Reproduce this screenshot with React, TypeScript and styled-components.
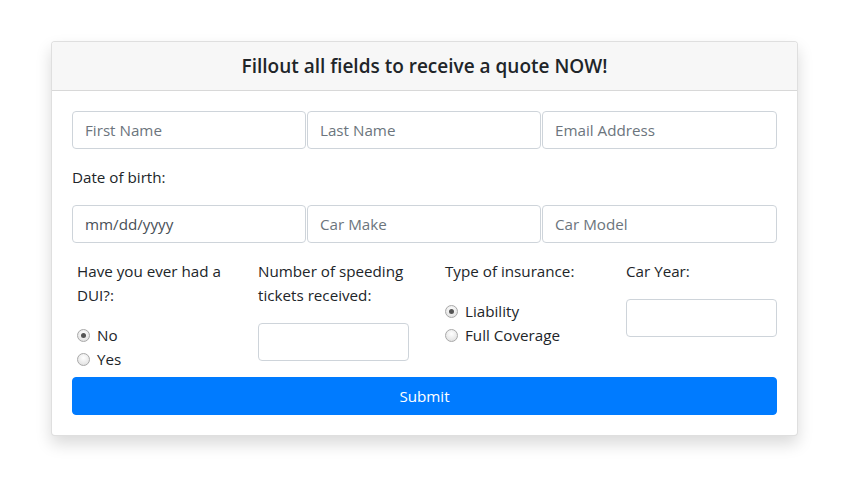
import React from "react";
import styled, { createGlobalStyle } from "styled-components";

const Global = createGlobalStyle`
  html, body { margin: 0; padding: 0; background: #fff; }
  body {
    font-family: "Open Sans", "Noto Sans", "Liberation Sans", sans-serif;
    font-size: 15.2px;
    line-height: 24px;
    color: #212529;
  }
  * { box-sizing: border-box; }
`;

const Page = styled.div`
  padding: 41px 0 40px 51px;
`;

const Card = styled.form`
  width: 747px;
  border: 1px solid rgba(0, 0, 0, 0.125);
  border-radius: 4px;
  background: #fff;
  box-shadow: 0 8px 16px rgba(0, 0, 0, 0.15);
  overflow: hidden;
`;

const Header = styled.div`
  background: #f7f7f7;
  border-bottom: 1px solid rgba(0, 0, 0, 0.125);
  padding: 12px 20px;
  text-align: center;
  font-size: 19px;
  line-height: 24px;
  font-weight: 600;
  color: #212529;
`;

const Body = styled.div`
  padding: 20px;
  display: flex;
  flex-direction: column;
`;

const InputRow = styled.div`
  display: grid;
  grid-template-columns: 234px 234px 235px;
  gap: 1px;
`;

const Input = styled.input<{ $dark?: boolean; $w?: number }>`
  display: block;
  width: ${(p) => (p.$w ? `${p.$w}px` : "100%")};
  height: 38px;
  padding: 6px 12px;
  font: inherit;
  color: #495057;
  background: #fff;
  border: 1px solid #ced4da;
  border-radius: 4px;
  outline: none;
  &::placeholder {
    color: ${(p) => (p.$dark ? "#495057" : "#6c757d")};
    opacity: 1;
  }
`;

const Label = styled.div<{ $mt?: number; $mb?: number }>`
  margin-top: ${(p) => p.$mt ?? 0}px;
  margin-bottom: ${(p) => p.$mb ?? 0}px;
`;

const Columns = styled.div`
  display: grid;
  grid-template-columns: 181px 187px 181px 151px;
  padding-left: 5px;
  margin-top: 16px;
`;

const Col = styled.div`
  display: flex;
  flex-direction: column;
  align-items: flex-start;
`;

const ColLabel = styled.div`
  margin-bottom: 16px;
`;

const RadioLine = styled.label`
  display: flex;
  align-items: center;
  gap: 7px;
  height: 24px;
`;

const RadioDot = styled.span<{ $on?: boolean }>`
  width: 13px;
  height: 13px;
  border-radius: 50%;
  border: 1px solid #a9a9a9;
  background: radial-gradient(circle at 50% 35%, #ffffff 0%, #e6e6e6 70%, #d6d6d6 100%);
  display: flex;
  align-items: center;
  justify-content: center;
  &::after {
    content: "";
    width: 5px;
    height: 5px;
    border-radius: 50%;
    background: ${(p) => (p.$on ? "#555" : "transparent")};
  }
`;

const Submit = styled.button`
  margin-top: 6px;
  height: 38px;
  width: 100%;
  border: 1px solid #007bff;
  border-radius: 4px;
  background: #007bff;
  color: #fff;
  font: inherit;
  cursor: pointer;
`;

const Radio = ({ label, on }: { label: string; on?: boolean }) => (
  <RadioLine>
    <RadioDot $on={on} />
    {label}
  </RadioLine>
);

export default function App() {
  return (
    <>
      <Global />
      <Page>
        <Card onSubmit={(e) => e.preventDefault()}>
          <Header>Fillout all fields to receive a quote NOW!</Header>
          <Body>
            <InputRow>
              <Input placeholder="First Name" />
              <Input placeholder="Last Name" />
              <Input placeholder="Email Address" />
            </InputRow>
            <Label $mt={16} $mb={16}>Date of birth:</Label>
            <InputRow>
              <Input placeholder="mm/dd/yyyy" $dark />
              <Input placeholder="Car Make" />
              <Input placeholder="Car Model" />
            </InputRow>
            <Columns>
              <Col>
                <ColLabel>
                  Have you ever had a
                  <br />
                  DUI?:
                </ColLabel>
                <Radio label="No" on />
                <Radio label="Yes" />
              </Col>
              <Col>
                <ColLabel>
                  Number of speeding
                  <br />
                  tickets received:
                </ColLabel>
                <Input $w={151} />
              </Col>
              <Col>
                <ColLabel>Type of insurance:</ColLabel>
                <Radio label="Liability" on />
                <Radio label="Full Coverage" />
              </Col>
              <Col>
                <ColLabel>Car Year:</ColLabel>
                <Input $w={151} />
              </Col>
            </Columns>
            <Submit type="submit">Submit</Submit>
          </Body>
        </Card>
      </Page>
    </>
  );
}
